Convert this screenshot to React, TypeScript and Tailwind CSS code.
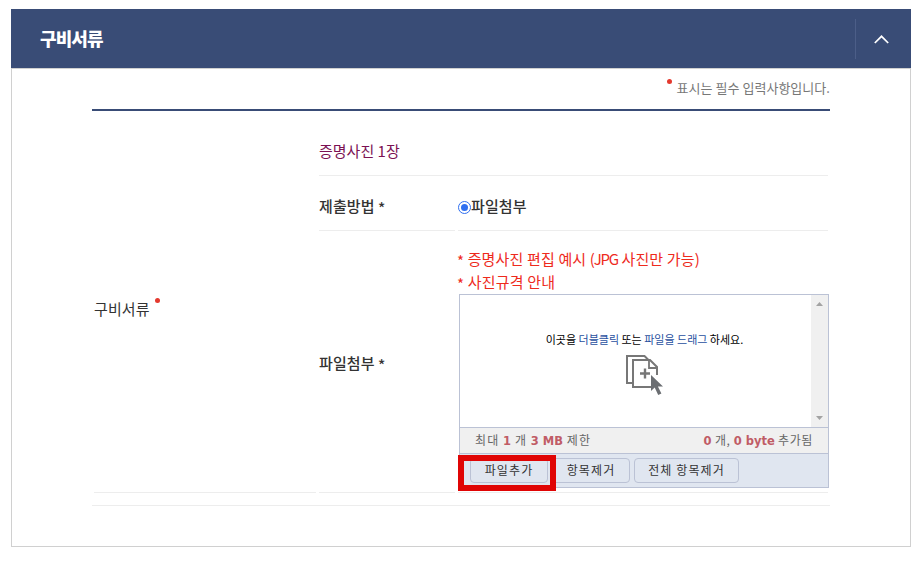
import React from "react";

const RequiredDot: React.FC<{ className?: string }> = ({ className }) => (
  <span className={`block h-[5px] w-[5px] rounded-full bg-[#e4392e] ${className ?? ""}`} />
);

const Count: React.FC<{ children: React.ReactNode }> = ({ children }) => (
  <b className="font-['DejaVu_Sans',sans-serif] text-[11.5px] tracking-normal text-[#c05c66]">{children}</b>
);

const Star = () => <span className="relative top-0.5">*</span>;

const FilesIcon = () => (
  <svg className="block" width="38" height="41" viewBox="0 0 38 41" fill="none" stroke="#777777" strokeWidth="2">
    <path d="M6 28H1V1h17.500l4 4" />
    <path d="M31 20V12l-7-7H7v27h18" />
    <path d="M23 5v8h8" strokeWidth="1.800" />
    <path d="M14 18.500h10M19 13.500v10" strokeWidth="2.400" />
    <path d="M25 20v16l3.700-3.500 3.500 7.500 3.200-1.500-3.500-7h5.100z" fill="#6b6e72" stroke="none" />
  </svg>
);

const App: React.FC<{}> = () => {
  const renderArrow = (d: string) => (
    <svg className="block" width="7" height="4" viewBox="0 0 7 4" fill="#a3a3a3">
      <path d={d} />
    </svg>
  );

  return (
    <div className="h-[563px] w-[923px] overflow-hidden bg-white pt-[9px] pl-[11px] font-['Noto_Sans_CJK_KR',sans-serif] text-[#333333] whitespace-nowrap">
      <div className="w-[900px]">
        {/* header */}
        <div className="flex h-[59px] items-center justify-between bg-[#394c76]">
          <h2 className="pl-[29px] text-[18px] font-black leading-[57px] tracking-[-0.9px] text-white">구비서류</h2>
          <button className="flex h-10 w-[56px] items-center border-l border-[#4c5e88] pl-[18px]">
            <svg className="mt-0.5" width="15" height="9" viewBox="0 0 15 9" fill="none" stroke="#ffffff" strokeWidth="1.7">
              <path d="M.8 8 7.500 1.300 14.200 8" />
            </svg>
          </button>
        </div>

        {/* body */}
        <div className="h-[479px] border border-[#d0d0d0] pl-20">
          <div className="w-[738px]">
            <div className="flex h-10 justify-end border-b-2 border-[#394c76] box-content">
              <RequiredDot className="mt-2.5 mr-[5px]" />
              <p className="text-[13px] leading-[38px] tracking-[0.03px] text-[#777777]">표시는 필수 입력사항입니다.</p>
            </div>

            <div className="flex h-[395px] gap-[3px] border-b border-[#ededed] px-0.5">
              <div className="flex h-[382px] w-[222px] items-center border-b border-[#ededed]">
                <div className="mt-3.5 flex">
                  <span className="text-[15px] leading-6 tracking-[0.1px]">구비서류</span>
                  <RequiredDot className="mt-[1px] ml-[5px]" />
                </div>
              </div>

              <div className="w-[509px] shrink-0 text-[15px] font-medium">
                <div className="h-[65px] border-b border-[#ededed] pt-7 leading-6 font-normal text-[#7b1153]">증명사진 1장</div>

                <div className="flex h-[55px] gap-[3px]">
                  <div className="w-[136px] border-b border-[#ededed] leading-[60px] tracking-[0.1px]">
                    제출방법 <Star />
                  </div>
                  <div className="flex flex-1 items-center border-b border-[#ededed]">
                    <span className="mt-2 flex h-[13px] w-[13px] items-center justify-center rounded-full border border-[#2f6ff0] bg-white">
                      <span className="h-[7px] w-[7px] rounded-full bg-[#2f6ff0]" />
                    </span>
                    <span className="mt-1.5 tracking-[0.1px]">파일첨부</span>
                  </div>
                </div>

                <div className="flex h-[262px] gap-[3px]">
                  <div className="flex w-[136px] shrink-0 items-center border-b border-[#ededed]">
                    <span className="mt-1 tracking-[0.1px]">
                      파일첨부 <Star />
                    </span>
                  </div>
                  <div className="w-[370px] shrink-0 border-b border-[#ededed] pt-4">
                    <p className="-ml-px h-[23px] leading-[23px] font-normal tracking-[0.15px] text-[#ee2a1c]">
                      <Star /> 증명사진 편집 예시 <span className="tracking-[-1.2px]">(JPG</span> 사진만 가능)
                    </p>
                    <p className="-ml-px h-6 leading-[23px] font-normal tracking-[0.2px] text-[#ee2a1c]">
                      <Star /> 사진규격 안내
                    </p>

                    {/* uploader */}
                    <div className="ml-px h-[194px] w-[370px] border border-[#bbc2d5] text-[12px] font-normal">
                      <div className="flex h-[132px]">
                        <div className="flex w-[351px] flex-col items-center pt-[34px] pl-[18px]">
                          <p className="text-[11px] leading-5 text-black">
                            이곳을 <span className="text-[#2850a0]">더블클릭</span> 또는 <span className="text-[#2850a0]">파일을 드래그</span> 하세요.
                          </p>
                          <div className="mt-1.5">
                            <FilesIcon />
                          </div>
                        </div>
                        <div className="flex flex-1 flex-col items-center justify-between bg-[#f0f0f0] py-[7px]">
                          {renderArrow("M0 4h7L3.500 0z")}
                          {renderArrow("M0 0h7L3.500 4z")}
                        </div>
                      </div>
                      <div className="flex h-[26px] items-center justify-between border-t border-[#bbc2d5] bg-[#f0f0f0] px-[15px] tracking-[0.6px] text-[#666666]">
                        <p className="tracking-[1.1px]">
                          최대 <Count>1</Count> 개 <Count>3 MB</Count> 제한
                        </p>
                        <p>
                          <Count>0</Count> 개, <Count>0 byte</Count> 추가됨
                        </p>
                      </div>
                      <div className="relative flex h-[34px] gap-1 border-t border-[#bbc2d5] bg-[#e0e6f0] pt-1 pl-2.5 tracking-[1.1px] text-[#333333]">
                        <button className="h-[25px] w-[78px] rounded border border-[#bbc2d5] pb-0.5">파일추가</button>
                        <button className="h-[25px] w-[78px] rounded border border-[#bbc2d5] pb-0.5">항목제거</button>
                        <button className="h-[25px] w-[105px] rounded border border-[#bbc2d5] pb-0.5">전체 항목제거</button>
                        <span className="absolute top-px -left-0.5 h-9 w-[98px] border-6 border-[#e00505]" />
                      </div>
                    </div>
                  </div>
                </div>
              </div>
            </div>
          </div>
        </div>
      </div>
    </div>
  );
};

export default App;
